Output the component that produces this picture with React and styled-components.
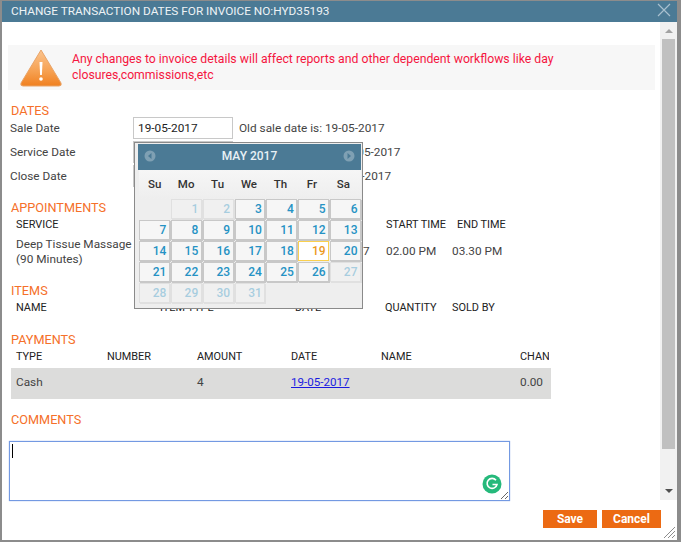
import React from 'react';
import styled, { createGlobalStyle } from 'styled-components';

const GlobalStyle = createGlobalStyle`
  * { box-sizing: border-box; }
  html, body { margin: 0; padding: 0; background: #fff; }
  body { font-family: Roboto, "Liberation Sans", sans-serif; font-size: 12px; color: #444; }
`;

const DialogWindow = styled.div`
  position: relative;
  width: 681px;
  height: 542px;
  overflow: hidden;
  background: #fff;
  border-style: solid;
  border-color: #8c8c8c;
  border-width: 1px 4px 2px 2px;
`;

const TitleBar = styled.div`
  display: flex;
  align-items: center;
  justify-content: space-between;
  height: 21px;
  padding: 0 6px 2px 9px;
  background: #4b7a95;
  color: #eef3f6;
  font-size: 11.8px;
`;

const CloseIcon = styled.svg`
  width: 14px;
  height: 14px;
  margin-bottom: 1px;
  stroke: #a9c0ce;
  stroke-width: 1.2;
`;

const Main = styled.div`
  display: flex;
  height: 478px;
`;

const Content = styled.div`
  flex: 1;
  min-width: 0;
  padding: 23px 5px 0 6px;
`;

const Warning = styled.div`
  display: flex;
  align-items: center;
  gap: 9px;
  height: 45px;
  padding-left: 11px;
  background: #f7f7f7;
  color: #f5163f;
  font-size: 12.25px;
  line-height: 16px;
`;

const WarningText = styled.span`
  margin-bottom: 1px;
`;

const WarningIcon = styled.svg`
  flex: none;
  width: 44px;
  height: 40px;
`;

const Heading = styled.div`
  height: 14px;
  margin-top: ${p => p.$top}px;
  padding-left: ${p => p.$indent || 3}px;
  color: #f5702a;
  font-size: 12.7px;
  line-height: ${p => p.$line || 16}px;
`;

const DateRow = styled.div`
  display: flex;
  align-items: center;
  height: 24px;
  padding-left: 2px;
  font-size: 11.8px;
`;

const DateLabel = styled.label`
  width: 123px;
  color: #444;
`;

const DateField = styled.div`
  position: relative;
  width: 100px;
  height: 22px;
`;

const DateInput = styled.input`
  width: 100%;
  height: 100%;
  padding: 0 4px;
  border: 1px solid #c8c8c8;
  outline: none;
  color: #222;
  font: 11.8px Roboto, sans-serif;
`;

const OldDate = styled.span`
  margin-left: 6px;
  color: #444;
`;

const Cols = styled.div`
  display: grid;
  grid-template-columns: ${p => p.$cols};
  align-items: center;
  margin-top: ${p => p.$top || 0}px;
  padding-left: ${p => p.$indent}px;
  min-height: ${p => p.$height}px;
  font-size: 10.9px;
  color: #222;
  white-space: nowrap;
`;

const DataCols = styled(Cols)`
  font-size: 11.8px;
  line-height: 15px;
  color: #444;
`;

const ServiceName = styled.span`
  white-space: normal;
  width: 125px;
`;

const PaymentTable = styled.div`
  width: 540px;
  margin-left: 3px;
  overflow: hidden;
`;

const ClippedHead = styled.span`
  overflow: hidden;
`;

const PaymentRow = styled(DataCols)`
  padding-bottom: 2px;
  background: #dcdcdb;
`;

const PaymentLink = styled.a`
  color: #1a1ae0;
  font-size: 11.6px;
  text-decoration: underline;
`;

const CommentBox = styled.div`
  position: relative;
  width: 501px;
  height: 60px;
  margin: 15px 0 0 1px;
`;

const CommentInput = styled.textarea`
  display: block;
  width: 100%;
  height: 100%;
  padding: 2px;
  border: 1px solid #7399e2;
  box-shadow: 0 0 1px #8aa8e6;
  outline: none;
  resize: both;
  font: 12px Roboto, sans-serif;
`;

const Caret = styled.span`
  position: absolute;
  left: 3px;
  top: 3px;
  width: 1px;
  height: 14px;
  background: #000;
`;

const GrammarlyBadge = styled.svg`
  position: absolute;
  right: 8px;
  bottom: 7px;
  width: 20px;
  height: 20px;
`;

const ScrollTrack = styled.div`
  flex: none;
  display: flex;
  flex-direction: column;
  align-items: center;
  width: 17px;
  background: #f1f1f1;
`;

const ScrollArrow = styled.div`
  flex: none;
  display: flex;
  align-items: center;
  justify-content: center;
  width: 100%;
  height: 17px;
  padding: ${p => (p.$down ? '0 0 1px' : '1px 0 0')};
  &::before {
    content: '';
    border-left: 4px solid transparent;
    border-right: 4px solid transparent;
    ${p => (p.$down ? 'border-top: 4px solid #505050;' : 'border-bottom: 4px solid #a3a3a3;')}
  }
`;

const ScrollThumb = styled.div`
  flex: 1;
  width: 13px;
  margin-bottom: 34px;
  background: #c0c0c0;
`;

const Footer = styled.div`
  display: flex;
  justify-content: flex-end;
  gap: 5px;
  padding: 10px 16px 0 0;
`;

const ActionButton = styled.button`
  width: ${p => p.$width}px;
  height: 18px;
  padding: 0;
  border: none;
  background: #ec6a13;
  color: #fff;
  font: 700 12px Roboto, sans-serif;
`;

const ResizeGrip = styled.svg`
  position: absolute;
  right: 1px;
  bottom: 1px;
  width: 13px;
  height: 13px;
  stroke: #8c8c8c;
  stroke-width: 1;
`;

/* date picker popup, sits over the form */
const Calendar = styled.div`
  position: absolute;
  top: 25px;
  left: 1px;
  z-index: 5;
  width: 229px;
  height: 167px;
  padding: 1px 1px 0 3px;
  border: 1px solid #8a8a8a;
  background: #eeeeee;
`;

const CalendarHead = styled.div`
  display: flex;
  align-items: center;
  justify-content: space-between;
  height: 26px;
  padding: 0 6px 2px;
  background: #4b7a95;
  color: #e8f1f6;
  font-size: 12px;
  font-weight: 500;
`;

const NavIcon = styled.svg`
  width: 12px;
  height: 12px;
`;

const WeekRow = styled.div`
  display: grid;
  grid-template-columns: repeat(7, 1fr);
  height: 29px;
  margin-left: 1px;
  padding: 0 2px 2px 0;
  align-items: center;
  background: linear-gradient(#f6f6f6, #eeeeee);
`;

const WeekDay = styled.span`
  text-align: center;
  color: #333;
  font-size: 11.5px;
  font-weight: 500;
`;

const DayGrid = styled.div`
  display: grid;
  grid-template-columns: repeat(7, 1fr);
  grid-auto-rows: 20px;
  gap: 1px;
  margin-left: 1px;
`;

const DayCell = styled.span`
  display: flex;
  align-items: center;
  justify-content: flex-end;
  padding-right: 2.5px;
  border: 1px solid ${p => (p.$today ? '#fad04e' : '#c8c8c8')};
  box-shadow: ${p => (p.$today ? 'none' : '1px 1px 0 #c8c8c8')};
  background: ${p => (p.$today ? '#fff' : '#f6f6f6')};
  color: ${p => (p.$today ? '#ec9a1f' : '#2592c4')};
  font-size: 12px;
  font-weight: 500;
  opacity: ${p => (p.$off ? 0.35 : 1)};
`;

const WEEK = ['Su', 'Mo', 'Tu', 'We', 'Th', 'Fr', 'Sa'];
const OFF_DAYS = [1, 2, 27, 28, 29, 30, 31];
const DAYS = Array.from({ length: 31 }, (_, i) => i + 1);

const APPT_HEAD = '144px 135px 91px 71px 70px';
const APPT_ROW = '144px 150px 76px 66px 70px';
const ITEM_COLS = '144px 135px 90px 67px 70px';
const PAY_COLS = '91px 90px 94px 90px 139px 29px';

const DatePopup = () => (
  <Calendar>
    <CalendarHead>
      <NavIcon viewBox="0 0 12 12">
        <circle cx="6" cy="6" r="5.5" fill="#7fa0b3" />
        <path d="M7.5 3 L4 6 L7.5 9 Z" fill="#4b7a95" />
      </NavIcon>
      MAY 2017
      <NavIcon viewBox="0 0 12 12">
        <circle cx="6" cy="6" r="5.5" fill="#7fa0b3" />
        <path d="M4.5 3 L8 6 L4.5 9 Z" fill="#4b7a95" />
      </NavIcon>
    </CalendarHead>
    <WeekRow>
      {WEEK.map(d => <WeekDay key={d}>{d}</WeekDay>)}
    </WeekRow>
    <DayGrid>
      <span />
      {DAYS.map(d => (
        <DayCell key={d} $off={OFF_DAYS.includes(d)} $today={d === 19}>{d}</DayCell>
      ))}
    </DayGrid>
  </Calendar>
);

const App = () => (
  <DialogWindow>
    <GlobalStyle />
    <TitleBar>
      CHANGE TRANSACTION DATES FOR INVOICE NO:HYD35193
      <CloseIcon viewBox="0 0 14 14">
        <path d="M1 1 L13 13 M13 1 L1 13" />
      </CloseIcon>
    </TitleBar>
    <Main>
      <Content>
        <Warning>
          <WarningIcon viewBox="0 0 44 40">
            <defs>
              <linearGradient id="warn" x1="0" y1="0" x2="0" y2="1">
                <stop offset="0" stopColor="#fbc48e" />
                <stop offset="0.6" stopColor="#f6a050" />
                <stop offset="1" stopColor="#f08020" />
              </linearGradient>
            </defs>
            <path d="M22 2 L42 35 Q43 38 40 38 L4 38 Q1 38 2 35 Z" fill="url(#warn)" stroke="#e9a468" strokeLinejoin="round" />
            <path d="M20.5 14 h3 l-.6 13 h-1.8 Z" fill="#fff" />
            <circle cx="22" cy="31" r="1.8" fill="#fff" />
          </WarningIcon>
          <WarningText>Any changes to invoice details will affect reports and other dependent workflows like day closures,commissions,etc</WarningText>
        </Warning>

        <Heading $top={12} $line={18}>DATES</Heading>
        <DateRow>
          <DateLabel>Sale Date</DateLabel>
          <DateField>
            <DateInput defaultValue="19-05-2017" />
            <DatePopup />
          </DateField>
          <OldDate>Old sale date is: 19-05-2017</OldDate>
        </DateRow>
        <DateRow>
          <DateLabel>Service Date</DateLabel>
          <DateField><DateInput defaultValue="19-05-2017" /></DateField>
          <OldDate>Old service date is: 19-05-2017</OldDate>
        </DateRow>
        <DateRow>
          <DateLabel>Close Date</DateLabel>
          <DateField><DateInput defaultValue="19-05-2017" /></DateField>
          <OldDate>Old close date is: 19-05-2017</OldDate>
        </DateRow>

        <Heading $top={12}>APPOINTMENTS</Heading>
        <Cols $cols={APPT_HEAD} $indent={8} $height={16} $top={2}>
          <span>SERVICE</span>
          <span>STAFF</span>
          <span>DATE</span>
          <span>START TIME</span>
          <span>END TIME</span>
        </Cols>
        <DataCols $cols={APPT_ROW} $indent={8} $height={31} $top={4}>
          <ServiceName>Deep Tissue Massage (90 Minutes)</ServiceName>
          <span>Staff</span>
          <span>19-05-2017</span>
          <span>02.00 PM</span>
          <span>03.30 PM</span>
        </DataCols>

        <Heading $top={16}>ITEMS</Heading>
        <Cols $cols={ITEM_COLS} $indent={8} $height={16} $top={2}>
          <span>NAME</span>
          <span>ITEM TYPE</span>
          <span>DATE</span>
          <span>QUANTITY</span>
          <span>SOLD BY</span>
        </Cols>

        <Heading $top={17}>PAYMENTS</Heading>
        <PaymentTable>
          <Cols $cols={PAY_COLS} $indent={5} $height={16} $top={2}>
            <span>TYPE</span>
            <span>NUMBER</span>
            <span>AMOUNT</span>
            <span>DATE</span>
            <span>NAME</span>
            <ClippedHead>CHANGE</ClippedHead>
          </Cols>
          <PaymentRow $cols={PAY_COLS} $indent={5} $height={31} $top={4}>
            <span>Cash</span>
            <span />
            <span>4</span>
            <PaymentLink href="#">19-05-2017</PaymentLink>
            <span />
            <span>0.00</span>
          </PaymentRow>
        </PaymentTable>

        <Heading $top={13}>COMMENTS</Heading>
        <CommentBox>
          <CommentInput />
          <Caret />
          <GrammarlyBadge viewBox="0 0 20 20">
            <circle cx="10" cy="10" r="9.5" fill="#25b97b" />
            <path d="M14 6.2 A5 5 0 1 0 15 10.5 L10.5 10.5" fill="none" stroke="#fff" strokeWidth="1.6" />
          </GrammarlyBadge>
        </CommentBox>
      </Content>
      <ScrollTrack>
        <ScrollArrow />
        <ScrollThumb />
        <ScrollArrow $down />
      </ScrollTrack>
    </Main>
    <Footer>
      <ActionButton $width={54}>Save</ActionButton>
      <ActionButton $width={59}>Cancel</ActionButton>
    </Footer>
    <ResizeGrip viewBox="0 0 13 13">
      <path d="M12 1 L1 12 M12 5 L5 12 M12 9 L9 12" />
    </ResizeGrip>
  </DialogWindow>
);

export default App;
